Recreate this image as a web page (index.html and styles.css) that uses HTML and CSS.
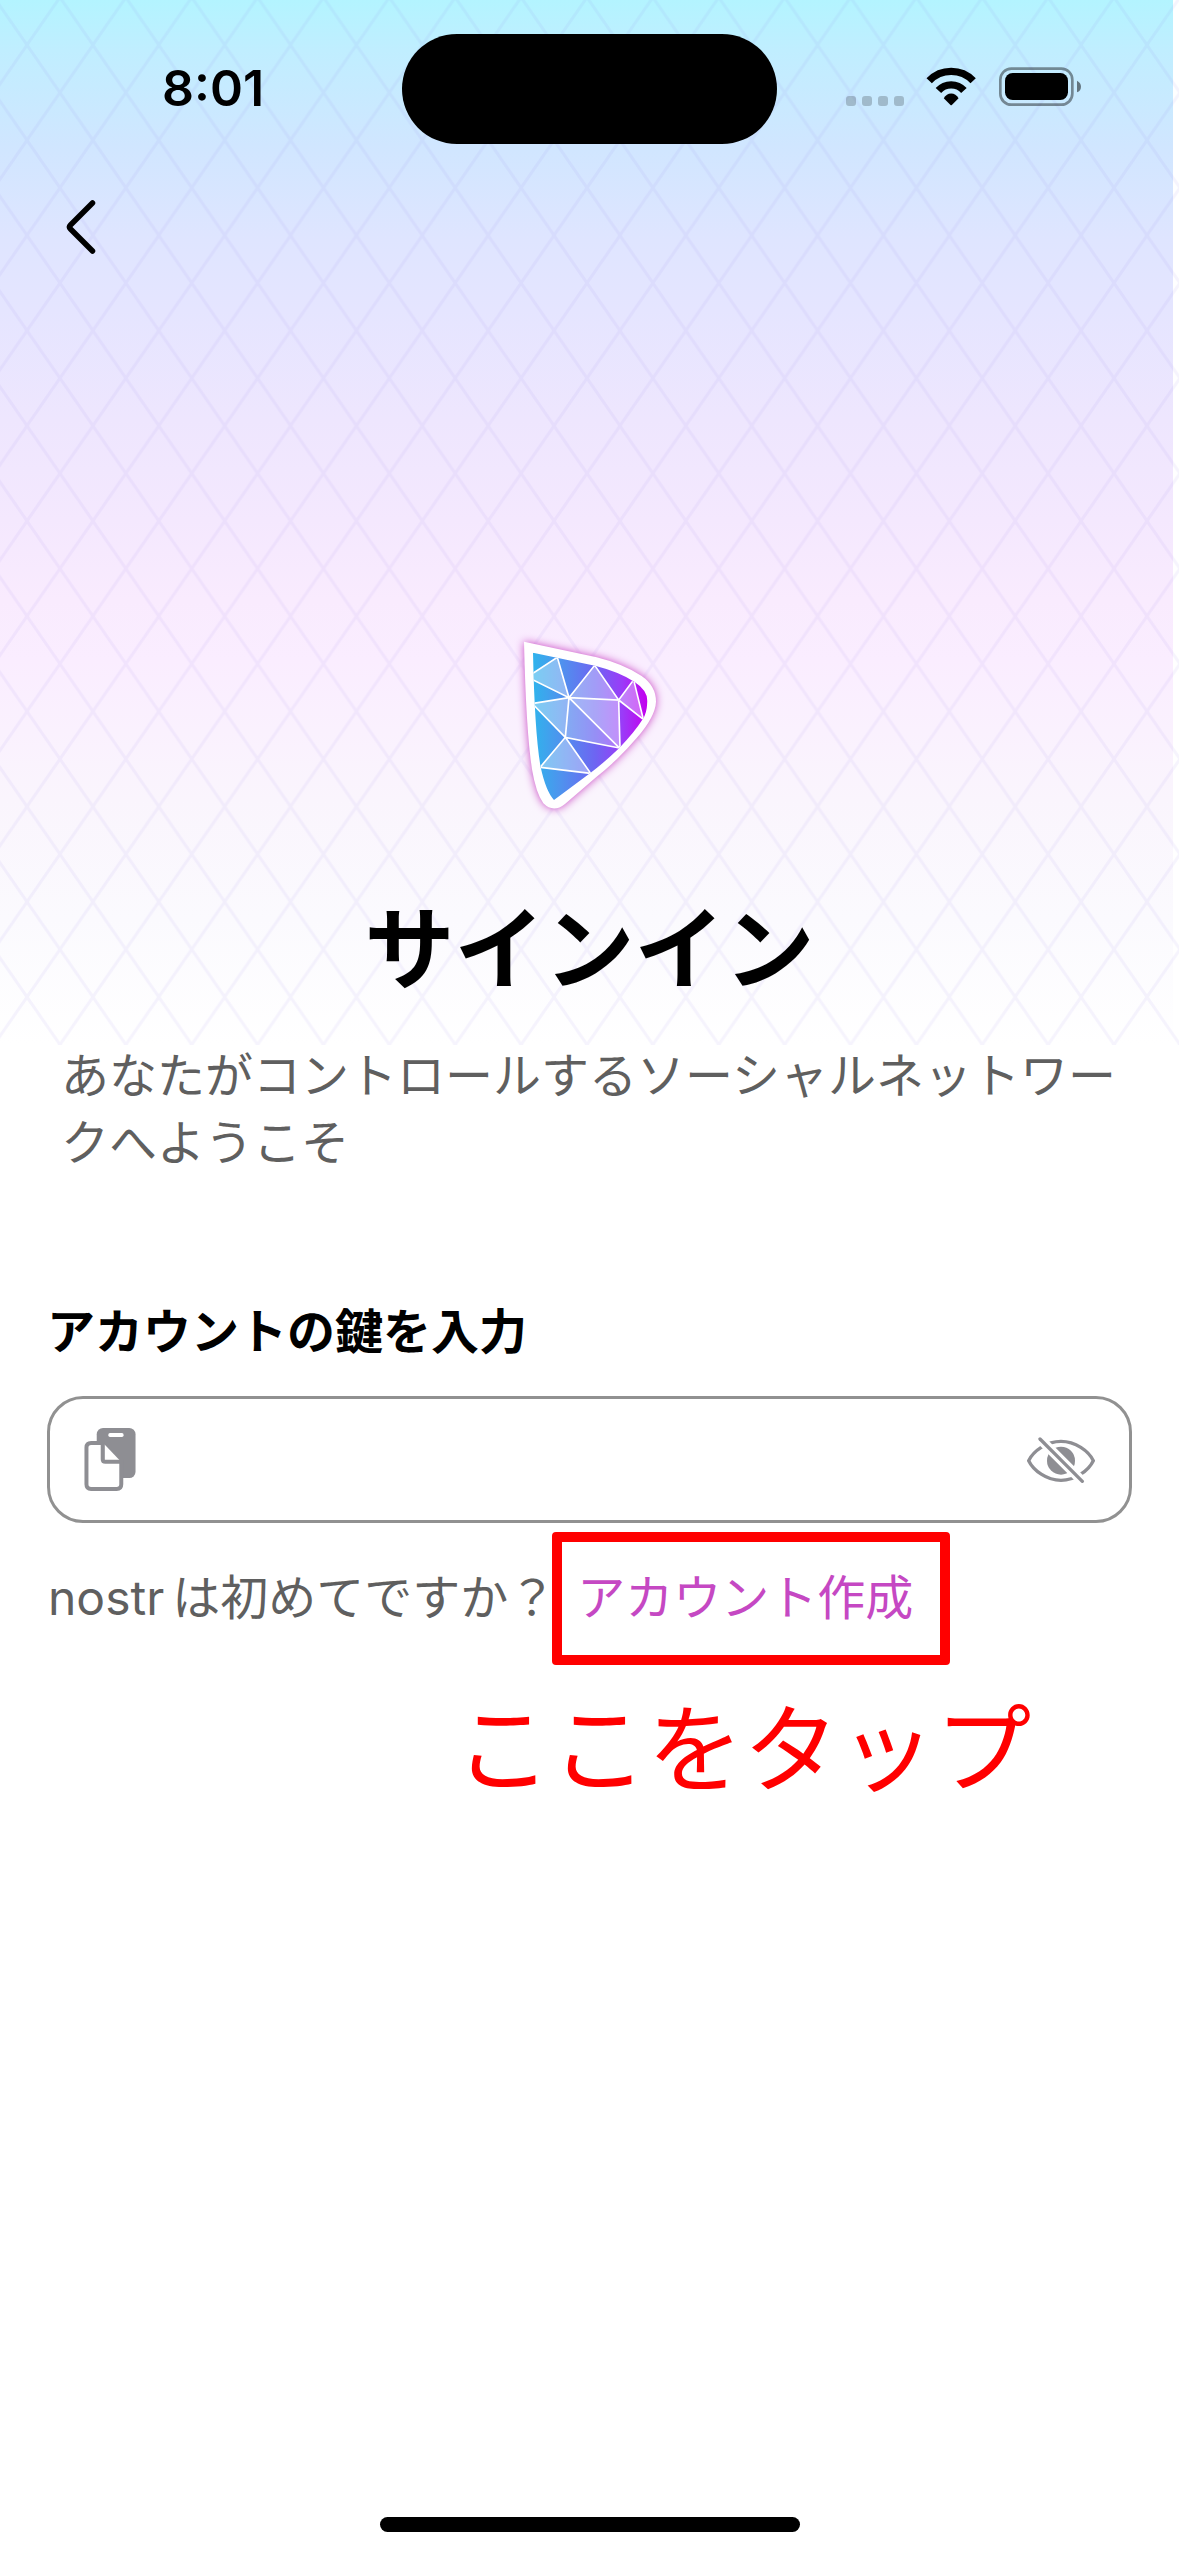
FILE: index.html
```html
<!DOCTYPE html>
<html lang="ja">
<head>
<meta charset="utf-8">
<meta name="viewport" content="width=device-width, initial-scale=1">
<title>サインイン</title>
<link rel="stylesheet" href="styles.css">
</head>
<body>
<div class="backdrop" aria-hidden="true">
  <svg class="lattice" width="100%" height="100%">
    <defs>
      <pattern id="diamonds" x="27" y="45" width="65.88" height="95.2" patternUnits="userSpaceOnUse">
        <path d="M-6.59 -9.52 L72.47 104.72 M72.47 -9.52 L-6.59 104.72" fill="none" stroke="#7a5ce0" stroke-opacity=".065" stroke-width="3"/>
      </pattern>
    </defs>
    <rect width="100%" height="100%" fill="url(#diamonds)"/>
  </svg>
</div>

<div class="screen">
  <header class="status-bar">
    <time class="clock">8:01</time>
    <div class="island"></div>
    <div class="indicators">
      <svg class="signal" viewBox="0 0 58 10"><g fill="#000" opacity=".2"><rect width="10" height="10" rx="3"/><rect x="16" width="10" height="10" rx="3"/><rect x="32" width="10" height="10" rx="3"/><rect x="48" width="10" height="10" rx="3"/></g></svg>
      <svg class="wifi" viewBox="379 84 152 116"><g fill="none" stroke="#000" stroke-width="22"><path d="M388.5 124.8 A91 91 0 0 1 519.5 124.8"/><path d="M416 154 A51 51 0 0 1 492 154"/></g><path d="M432 177 Q440 163 454 163 Q468 163 476 177 L456 197 Q454 199 452 197Z"/></svg>
      <svg class="battery" viewBox="597 84 246 117"><rect x="601" y="89" width="216" height="108" rx="33" fill="none" stroke="#000" stroke-opacity=".42" stroke-width="8"/><rect x="615" y="102" width="189" height="81" rx="23"/><path d="M831 125 Q843 131 843 143 Q843 155 831 160Z" fill-opacity=".5"/></svg>
    </div>
  </header>

  <nav class="nav">
    <button class="back" type="button" aria-label="戻る">
      <svg viewBox="0 0 30 54"><path d="M26.500 3 L4.500 25 Q2.500 27 4.500 29 L26.500 51" fill="none" stroke="#000" stroke-width="5.500" stroke-linecap="round" stroke-linejoin="round"/></svg>
    </button>
  </nav>

  <main class="content">
    <section class="intro">
      <svg class="logo" viewBox="0 0 540 630" role="img" aria-label="ロゴ">
        <defs>
          <linearGradient id="gem" gradientUnits="userSpaceOnUse" x1="98" y1="270" x2="442" y2="270">
            <stop offset="0" stop-color="#2fb4ec"/><stop offset=".25" stop-color="#4f92ee"/><stop offset=".55" stop-color="#6e64f2"/><stop offset=".78" stop-color="#9a3cf8"/><stop offset="1" stop-color="#c400ee"/>
          </linearGradient>
          <clipPath id="gem-shape"><path d="M99 98 L285 137 Q360 156 404 186 Q444 212 442 246 Q440 282 428 298 Q404 336 358 384 Q310 430 272 458 L162 540 Q138 515 122 442 Q104 340 99 98Z"/></clipPath>
        </defs>
        <path class="logo-rim" d="M72 65 L290 112 Q370 132 425 168 Q468 198 468 245 Q466 290 410 354 Q350 424 290 470 L195 552 Q160 580 130 550 Q108 520 96 448 Q78 330 72 65Z" fill="#fff"/>
        <g clip-path="url(#gem-shape)">
          <rect x="90" y="90" width="360" height="460" fill="url(#gem)"/>
          <g fill="#fff" fill-opacity=".36">
            <path d="M90 166 L172 112 L207 233 L98 180Z"/>
            <path d="M282 136 L356 240 L207 233Z"/>
            <path d="M207 233 L356 240 L358 384Z" fill-opacity=".42"/>
            <path d="M98 250 L207 233 L196 352Z"/>
            <path d="M196 352 L272 458 L122 442Z"/>
            <path d="M207 233 L358 384 L196 352Z" fill-opacity=".28"/>
            <path d="M400 186 L430 298 L356 240Z"/>
          </g>
          <path d="M90 166 L172 112 L207 233 L96 178 M207 233 L284 136 L356 240 L207 233 L100 250 M207 233 L196 352 L98 252 M207 233 L358 384 L196 352 L122 440 M122 442 L272 460 L196 352 M398 184 L356 240 L430 298 L402 184 M356 240 L360 384" fill="none" stroke="#fff" stroke-width="5"/>
        </g>
      </svg>
      <h1 class="title">サインイン</h1>
      <p class="subtitle">あなたがコントロールするソーシャルネットワークへようこそ</p>
    </section>

    <form class="sign-in">
      <label class="label" for="account-key">アカウントの鍵を入力</label>
      <div class="field">
        <button class="icon-button" type="button" aria-label="貼り付け">
          <svg class="paste" viewBox="40 54 156 190"><rect x="78" y="54" width="117" height="151" rx="19" fill="#8e8e93"/><rect x="113" y="69" width="46" height="12" rx="5" fill="#fff"/><path d="M96 99 H61 Q47 99 47 113 V224 Q47 238 61 238 H138 Q152 238 152 224 V156 H96Z" fill="#fff"/><path d="M101 103 L147 151 H101Z" fill="#fff"/><path d="M96 99 H61 Q47 99 47 113 V224 Q47 238 61 238 H138 Q152 238 152 224 V156 H104 Q96 156 96 148Z" fill="none" stroke="#8e8e93" stroke-width="12"/></svg>
        </button>
        <input class="key-input" id="account-key" type="password" autocomplete="off">
        <button class="icon-button" type="button" aria-label="鍵を表示">
          <svg class="eye" viewBox="141 170 204 138"><path d="M146 241 C160 212 200 183 243 183 C286 183 326 212 340 241 C326 270 286 300 243 300 C200 300 160 270 146 241Z" fill="none" stroke="#8e8e93" stroke-width="10"/><circle cx="243" cy="241" r="42" fill="#8e8e93"/><path d="M170 166 L317 313" stroke="#fff" stroke-width="29"/><path d="M180 176 L307 303" stroke="#8e8e93" stroke-width="10" stroke-linecap="round"/></svg>
        </button>
      </div>
      <p class="prompt"><span class="brand">nostr</span><span>は初めてですか？</span>
        <span class="callout"><a class="create" href="#create">アカウント作成</a><strong class="callout-text">ここをタップ</strong></span>
      </p>
    </form>
  </main>

  <div class="home-bar"></div>
</div>
</body>
</html>
```
FILE: styles.css
```css
* {
  box-sizing: border-box;
}

body {
  margin: 0;
  background: #fff;
  color: #000;
  font-family: "Noto Sans CJK JP", sans-serif;
}

h1,
p {
  margin: 0;
}

button {
  display: flex;
  padding: 0;
  border: 0;
  background: none;
}

svg {
  display: block;
}

.backdrop {
  position: absolute;
  top: 0;
  left: 0;
  width: 100%;
  height: 1045px;
  padding-right: 6px;
  background: linear-gradient(#b3f4ff 0, #c0eeff 50px, #d0e6ff 145px, #dfe5ff 240px, #e5e5ff 310px, #eee6fe 420px, #f4e8fe 520px, #f9ebfe 600px, #faedff 660px, #faf5fd 800px, #fbfafe 920px, #fff 1045px) no-repeat content-box;
}

.lattice {
  position: absolute;
  inset: 0;
}

.screen {
  position: relative;
  display: flex;
  flex-direction: column;
  min-height: 100vh;
}

.status-bar {
  display: grid;
  grid-template-columns: 1fr 375px 1fr;
  padding-top: 34px;
}

.clock {
  align-self: center;
  padding: 0 0 2px 24px;
  font: 600 50px/60px Inter, sans-serif;
  text-align: center;
}

.island {
  height: 110px;
  border-radius: 55px;
  background: #000;
}

.indicators {
  display: flex;
  align-items: flex-end;
  justify-content: flex-end;
  gap: 22px;
  padding: 0 98px 38px 0;
}

.signal {
  width: 58px;
  height: 10px;
}

.wifi {
  width: 51px;
  height: 39px;
}

.battery {
  width: 82px;
  height: 39px;
}

.nav {
  padding: 56px 66px 0;
}

.back svg {
  width: 30px;
  height: 54px;
}

.content {
  padding: 366px 47px 0;
}

.intro {
  display: flex;
  flex-direction: column;
  align-items: center;
  padding: 0 14px;
}

.logo {
  width: 180px;
  height: 210px;
}

.logo-rim {
  filter: drop-shadow(0 0 12px #c63fc0);
}

.title {
  margin-top: 58px;
  font-size: 90px;
  font-weight: 700;
  line-height: 110px;
}

.subtitle {
  width: 100%;
  margin-top: 41px;
  color: #5f5f5f;
  font-size: 48px;
  line-height: 67px;
}

.sign-in {
  display: flex;
  flex-direction: column;
  margin-top: 125px;
}

.label {
  font-size: 48px;
  font-weight: 700;
  line-height: 60px;
}

.field {
  display: flex;
  align-items: center;
  gap: 24px;
  height: 127px;
  margin-top: 38px;
  padding: 0 34px;
  border: 3px solid #919191;
  border-radius: 36px;
}

.key-input {
  flex: 1;
  min-width: 0;
  height: 100%;
  border: 0;
  outline: 0;
  background: none;
  font-size: 48px;
}

.paste {
  width: 52px;
  height: 63px;
}

.eye {
  width: 68px;
  height: 46px;
}

.prompt {
  display: flex;
  align-items: baseline;
  margin-top: 38px;
  padding-left: 1px;
  color: #5f5f5f;
  font-size: 48px;
  line-height: 67px;
}

.brand {
  margin-right: 8px;
  font-family: Inter, sans-serif;
}

.callout {
  position: relative;
  margin-left: 21px;
}

.callout::before {
  content: "";
  position: absolute;
  inset: -29px -37px -37px -25px;
  border: 10px solid #f00;
  border-radius: 4px;
  pointer-events: none;
}

.create {
  position: relative;
  color: #c548c3;
  text-decoration: none;
}

.callout-text {
  position: absolute;
  top: 100%;
  left: -122px;
  margin-top: 60px;
  color: #f00;
  font-size: 96px;
  font-weight: 400;
  line-height: 110px;
  white-space: nowrap;
}

.home-bar {
  width: 420px;
  height: 15px;
  margin: auto auto 24px;
  border-radius: 8px;
  background: #000;
}
```
